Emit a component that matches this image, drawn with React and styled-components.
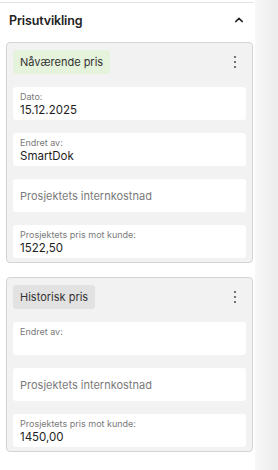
import React from "react";
import styled, { createGlobalStyle } from "styled-components";

const Global = createGlobalStyle`
  html, body { margin: 0; padding: 0; background: #fff; }
  body { font-family: Inter, "Noto Sans", sans-serif; color: #222; }
  * { box-sizing: border-box; }
`;

const Page = styled.div`
  display: flex;
  width: 278px;
  height: 470px;
  overflow: hidden;
`;

const Main = styled.div`
  width: 255px;
  display: flex;
  flex-direction: column;
`;

const Strip = styled.div`
  flex: 1;
  background: linear-gradient(to right, #f8f8f8, #ececec);
`;

const TopRule = styled.div`
  height: 1px;
  margin-top: 2px;
  width: 254px;
  background: #e3e3e3;
`;

const Header = styled.div`
  display: flex;
  align-items: center;
  justify-content: space-between;
  height: 34px;
  padding: 0 10px 0 9px;
`;

const Title = styled.h2`
  margin: 0;
  font-size: 12.5px;
  font-weight: 600;
  color: #222;
  letter-spacing: -0.15px;
`;

const Cards = styled.div`
  display: flex;
  flex-direction: column;
  gap: 14px;
  padding: 5px 2px 0 6px;
`;

const Card = styled.div`
  border: 1px solid #d4d4d4;
  border-radius: 4px;
  background: #f2f2f2;
  padding: 7px 6px 4px 6px;
  display: flex;
  flex-direction: column;
  gap: 13px;
`;

const CardHead = styled.div`
  display: flex;
  align-items: center;
  justify-content: space-between;
`;

const Badge = styled.span`
  display: inline-flex;
  align-items: center;
  height: 24px;
  padding: 0 7px;
  border-radius: 3px;
  font-size: 11px;
  color: #333;
  background: ${(p) => (p.$tone === "green" ? "#e5f2dc" : "#e2e2e2")};
`;

const Kebab = styled.button`
  border: 0;
  background: transparent;
  padding: 0;
  width: 16px;
  height: 16px;
  display: flex;
  align-items: center;
  justify-content: center;
  margin-right: 3px;
`;

const Field = styled.div`
  background: #fff;
  border-radius: 3px;
  height: 33px;
  padding: ${(p) => (p.$placeholder ? "0 7px" : "4px 7px 0 7px")};
  display: flex;
  flex-direction: column;
  justify-content: ${(p) => (p.$placeholder ? "center" : "flex-start")};
`;

const Label = styled.div`
  font-size: 9px;
  color: #7a7a7a;
  line-height: 11px;
`;

const Value = styled.div`
  font-size: 11.5px;
  color: #1e1e1e;
  line-height: 15px;
  margin-top: 1px;
`;

const Placeholder = styled.div`
  font-size: 11px;
  color: #7a7a7a;
`;

const ChevronUp = () => (
  <svg width="12" height="12" viewBox="0 0 12 12" fill="none">
    <path d="M2.7 7.6 6 4.4l3.3 3.2" stroke="#222" strokeWidth="1.5" strokeLinecap="round" strokeLinejoin="round" />
  </svg>
);

const Dots = () => (
  <svg width="4" height="14" viewBox="0 0 4 14">
    <circle cx="2" cy="2" r="1.1" fill="#555" />
    <circle cx="2" cy="7" r="1.1" fill="#555" />
    <circle cx="2" cy="12" r="1.1" fill="#555" />
  </svg>
);

const InfoField = ({ label, value }) => (
  <Field>
    <Label>{label}</Label>
    {value ? <Value>{value}</Value> : null}
  </Field>
);

const PriceCard = ({ title, tone, fields }) => (
  <Card>
    <CardHead>
      <Badge $tone={tone}>{title}</Badge>
      <Kebab aria-label="Mer">
        <Dots />
      </Kebab>
    </CardHead>
    {fields.map((f, i) =>
      f.placeholder ? (
        <Field key={i} $placeholder>
          <Placeholder>{f.placeholder}</Placeholder>
        </Field>
      ) : (
        <InfoField key={i} label={f.label} value={f.value} />
      )
    )}
  </Card>
);

export default function App() {
  return (
    <Page>
      <Global />
      <Main>
        <TopRule />
        <Header>
          <Title>Prisutvikling</Title>
          <ChevronUp />
        </Header>
        <Cards>
          <PriceCard
            title="Nåværende pris"
            tone="green"
            fields={[
              { label: "Dato:", value: "15.12.2025" },
              { label: "Endret av:", value: "SmartDok" },
              { placeholder: "Prosjektets internkostnad" },
              { label: "Prosjektets pris mot kunde:", value: "1522,50" },
            ]}
          />
          <PriceCard
            title="Historisk pris"
            tone="grey"
            fields={[
              { label: "Endret av:", value: "" },
              { placeholder: "Prosjektets internkostnad" },
              { label: "Prosjektets pris mot kunde:", value: "1450,00" },
            ]}
          />
        </Cards>
      </Main>
      <Strip />
    </Page>
  );
}
